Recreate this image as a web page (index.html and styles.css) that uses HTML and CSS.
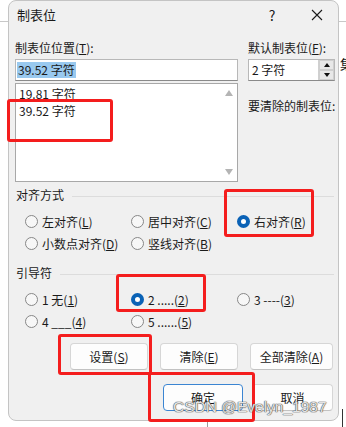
FILE: index.html
```html
<!DOCTYPE html>
<html lang="zh-CN">
<head>
    <meta charset="UTF-8">
    <title>制表位</title>
    <link rel="stylesheet" href="styles.css">
</head>
<body>
<div class="page">
    <div class="bg-line bg-line-left"></div>
    <div class="bg-line bg-line-right"></div>
    <div class="bg-glyph">集</div>
    <div class="bg-vline bg-vline-mid"></div>
    <div class="bg-vline bg-vline-right"></div>

    <div class="dialog">
        <div class="titlebar">
            <span class="title">制表位</span>
            <span class="help">?</span>
            <span class="close">
                <svg width="12" height="12" viewBox="0 0 12 12"><path d="M1 1L11 11M11 1L1 11" stroke="#1a1a1a" stroke-width="1.1" fill="none"/></svg>
            </span>
        </div>

        <div class="content">
            <div class="top">
                <div class="col-left">
                    <div class="label">制表位位置(<u>T</u>):</div>
                    <div class="input"><span class="selected">39.52 字符</span></div>
                    <div class="listbox">
                        <div class="items">
                            <div class="item">19.81 字符</div>
                            <div class="item">39.52 字符</div>
                        </div>
                        <div class="scroll">
                            <span class="arrow-up"></span>
                            <span class="arrow-down"></span>
                        </div>
                    </div>
                </div>
                <div class="col-right">
                    <div class="label">默认制表位(<u>F</u>):</div>
                    <div class="spin">
                        <span class="spin-value">2 字符</span>
                        <span class="spin-buttons">
                            <span class="spin-btn"><span class="tri-up"></span></span>
                            <span class="spin-btn"><span class="tri-down"></span></span>
                        </span>
                    </div>
                    <div class="label clear-label">要清除的制表位:</div>
                </div>
            </div>

            <div class="section first">
                <div class="section-head"><span>对齐方式</span><span class="rule"></span></div>
                <div class="radios">
                    <label class="radio"><span class="dot"></span><span>左对齐(<u>L</u>)</span></label>
                    <label class="radio"><span class="dot"></span><span>居中对齐(<u>C</u>)</span></label>
                    <label class="radio"><span class="dot on"></span><span>右对齐(<u>R</u>)</span></label>
                    <label class="radio"><span class="dot"></span><span>小数点对齐(<u>D</u>)</span></label>
                    <label class="radio"><span class="dot"></span><span>竖线对齐(<u>B</u>)</span></label>
                </div>
            </div>

            <div class="section">
                <div class="section-head"><span>引导符</span><span class="rule"></span></div>
                <div class="radios">
                    <label class="radio"><span class="dot"></span><span>1 无(<u>1</u>)</span></label>
                    <label class="radio"><span class="dot on"></span><span>2 .....(<u>2</u>)</span></label>
                    <label class="radio"><span class="dot"></span><span>3 ----(<u>3</u>)</span></label>
                    <label class="radio"><span class="dot"></span><span>4 ___(<u>4</u>)</span></label>
                    <label class="radio"><span class="dot"></span><span>5 ......(<u>5</u>)</span></label>
                </div>
            </div>

            <div class="buttons row1">
                <button class="btn w-set">设置(<u>S</u>)</button>
                <button class="btn w-clear">清除(<u>E</u>)</button>
                <button class="btn w-all">全部清除(<u>A</u>)</button>
            </div>
            <div class="buttons row2">
                <button class="btn default w-ok">确定</button>
                <button class="btn w-cancel">取消</button>
            </div>
        </div>
    </div>

    <!-- annotation boxes drawn over the dialog -->
    <div class="mark mark-list"></div>
    <div class="mark mark-align"></div>
    <div class="mark mark-leader"></div>
    <div class="mark mark-set"></div>
    <div class="mark mark-ok"></div>

    <div class="watermark">CSDN @Evelyn_1987</div>
</div>
</body>
</html>
```

FILE: styles.css
```css
body {
    margin: 0;
    background: #ffffff;
    font-family: "Noto Sans CJK SC", "Noto Sans", sans-serif;
    font-size: 12px;
    color: #1a1a1a;
}

.page {
    position: relative;
    width: 346px;
    height: 427px;
    overflow: hidden;
}

/* bits of the window behind the dialog */
.bg-line {
    position: absolute;
    top: 21px;
    height: 1px;
    background: #c8c8c8;
}
.bg-line-left { left: 0; width: 9px; }
.bg-line-right { left: 338px; width: 8px; }

.bg-glyph {
    position: absolute;
    left: 340px;
    top: 56px;
    width: 6px;
    overflow: hidden;
    font-size: 13px;
    line-height: 16px;
}

.bg-vline {
    position: absolute;
    width: 1px;
}
.bg-vline-mid { left: 207px; top: 420px; height: 7px; background: #9a9a9a; }
.bg-vline-right { left: 342px; top: 409px; height: 18px; background: #333; }

.dialog {
    position: relative;
    margin-left: 8px;
    width: 331px;
    height: 421px;
    box-sizing: border-box;
    background: #f0f0f0;
    border: 1px solid #c4c4c4;
    border-radius: 8px;
}

.titlebar {
    display: flex;
    align-items: center;
    height: 27px;
    padding-left: 8px;
}

.title {
    font-size: 13px;
    flex: 1;
}

.help {
    font-size: 14px;
    width: 14px;
    text-align: center;
    margin-right: 32px;
}

.close {
    display: flex;
    margin-right: 15px;
}

.content {
    padding: 12px 0 0 6px;
}

.label {
    line-height: 16px;
    height: 16px;
    white-space: nowrap;
}

.top {
    display: flex;
    gap: 10px;
}

.col-left { width: 223px; }
.col-right { width: 87px; }

.input {
    margin-top: 3px;
    height: 22px;
    box-sizing: border-box;
    background: #fff;
    border: 1px solid #b8b8b8;
    border-bottom-color: #8a8a8a;
    padding: 2px 1px;
    line-height: 16px;
}

.selected {
    background: #99c9ef;
    padding: 0 1px;
    display: inline-block;
}

.listbox {
    margin-top: 2px;
    height: 99px;
    box-sizing: border-box;
    background: #fff;
    border: 1px solid #a8a8a8;
    display: flex;
}

.items {
    flex: 1;
    padding: 1px 3px;
}

.item {
    line-height: 17px;
}

.scroll {
    width: 17px;
    display: flex;
    flex-direction: column;
    justify-content: space-between;
    align-items: center;
    padding: 6px 0 6px;
}

.arrow-up,
.arrow-down {
    width: 0;
    height: 0;
    border-left: 4px solid transparent;
    border-right: 4px solid transparent;
}
.arrow-up { border-bottom: 6px solid #b4b4b4; }
.arrow-down { border-top: 6px solid #b4b4b4; }

.spin {
    margin-top: 3px;
    height: 22px;
    box-sizing: border-box;
    background: #fff;
    border: 1px solid #b8b8b8;
    border-bottom-color: #8a8a8a;
    display: flex;
}

.spin-value {
    flex: 1;
    padding: 2px 3px;
    line-height: 16px;
}

.spin-buttons {
    width: 15px;
    display: flex;
    flex-direction: column;
    border-left: 1px solid #d0d0d0;
}

.spin-btn {
    flex: 1;
    background: #e8e8e8;
    border: 1px solid #cfcfcf;
    display: flex;
    align-items: center;
    justify-content: center;
}

.tri-up,
.tri-down {
    width: 0;
    height: 0;
    border-left: 3px solid transparent;
    border-right: 3px solid transparent;
}
.tri-up { border-bottom: 4px solid #111; }
.tri-down { border-top: 4px solid #111; }

.clear-label {
    margin-top: 17px;
}

.section {
    margin-top: 11px;
}
.section.first {
    margin-top: 5px;
}

.section-head {
    display: flex;
    align-items: center;
    gap: 8px;
    line-height: 16px;
    width: 318px;
    padding-left: 1px;
}

.rule {
    flex: 1;
    height: 1px;
    background: #dcdcdc;
    margin-top: 2px;
}

.radios {
    margin-top: 7px;
    padding-left: 10px;
    display: grid;
    grid-template-columns: 106px 106px auto;
    grid-auto-rows: 22px;
}

.radio {
    display: flex;
    align-items: center;
    gap: 4px;
    white-space: nowrap;
}

.dot {
    width: 13px;
    height: 13px;
    box-sizing: border-box;
    border-radius: 50%;
    border: 1px solid #878787;
    background: #f7f7f7;
}

.dot.on {
    border: 4px solid #0a62b6;
    background: #fff;
}

.buttons {
    display: flex;
    justify-content: flex-end;
    width: 318px;
}
.buttons.row1 { margin-top: 11px; gap: 12px; }
.buttons.row2 { margin-top: 14px; gap: 9px; }

.btn {
    height: 27px;
    box-sizing: border-box;
    font-family: inherit;
    font-size: 12px;
    color: #1a1a1a;
    background: #fdfdfd;
    border: 1px solid #d6d6d6;
    border-bottom-color: #c2c2c2;
    border-radius: 4px;
    padding: 0;
}

.btn.default {
    border: 1px solid #3b85d2;
}

.w-set { width: 78px; }
.w-clear { width: 78px; }
.w-all { width: 83px; }
.w-ok { width: 80px; }
.w-cancel { width: 81px; }

.mark {
    position: absolute;
    border: 3px solid #f41d1d;
    border-radius: 3px;
    box-sizing: border-box;
}
.mark-list { left: 7px; top: 99px; width: 106px; height: 43px; }
.mark-align { left: 224px; top: 189px; width: 90px; height: 48px; }
.mark-leader { left: 116px; top: 274px; width: 90px; height: 38px; }
.mark-set { left: 58px; top: 334px; width: 94px; height: 41px; }
.mark-ok { left: 148px; top: 372px; width: 107px; height: 50px; }

.watermark {
    position: absolute;
    left: 173px;
    top: 397px;
    font-family: "Liberation Sans", Arial, sans-serif;
    font-size: 15.5px;
    line-height: 20px;
    color: rgba(255, 255, 255, 0.85);
    text-shadow: 0 0 1px #555, 0 0 1px #555, 0 0 1px #555;
    white-space: nowrap;
}
```
